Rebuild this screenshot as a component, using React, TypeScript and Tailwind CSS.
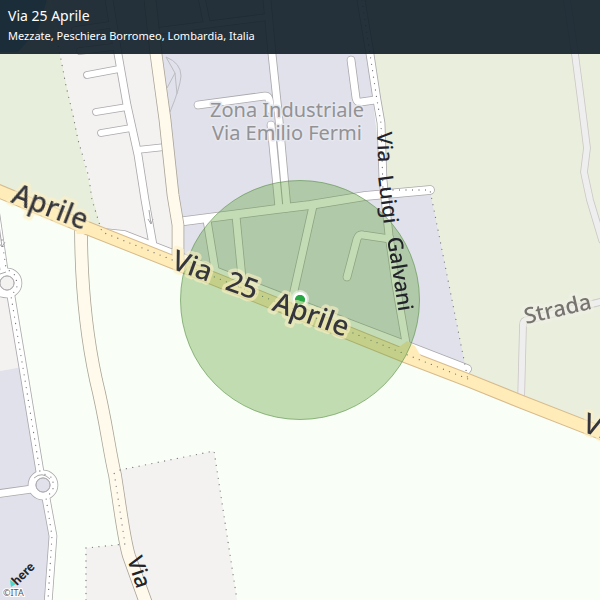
type Road = { d: string; w: number };

const serviceRoads: Road[] = [
  { d: "M109 0L118 54L127 105L138 155L145 200L153 245", w: 7 },
  { d: "M119 69L87 75", w: 6 },
  { d: "M127 107L96 112", w: 6 },
  { d: "M131 128L101 133", w: 6 },
  { d: "M113 47L80 51M110 25L75 30", w: 6 },
  { d: "M137 150L165 147", w: 6 },
  { d: "M158 31L267 17M202 0L207 24", w: 6 },
  { d: "M267 0L272 54L279 120L287 208", w: 7 },
  { d: "M271 125L279 208", w: 7 },
  { d: "M198 105L265 96Q268 96 269 99L271 110", w: 7 },
  { d: "M177 222L277 209L310 205L365 196L430 190", w: 8 },
  { d: "M207 220L215 269", w: 7 },
  { d: "M236 216L242 278", w: 7 },
  { d: "M313 206L292 300", w: 7 },
  { d: "M347 277L357 239Q359 234 363 235L390 239", w: 7 },
  { d: "M361 0L370 54L377 100L381 123L383 180L389 235L396 285L406 343", w: 7 },
  { d: "M351 60L356 98Q357 103 361 102L375 100", w: 7 },
  { d: "M105 233L124 235L173 254L217 272L350 324L405 345L467 369", w: 8 },
  { d: "M-8 195L-4 215L4 270", w: 7 },
  { d: "M11 296L25 380L40 472", w: 7 },
  { d: "M46 498L53 536L48 604", w: 7 },
  { d: "M-4 494L32 489", w: 7 },
  { d: "M-4 293L2 293", w: 7 },
  { d: "M18 283A11 11 0 1 1 -4 283A11 11 0 1 1 18 283", w: 7 },
  { d: "M54 485A11 11 0 1 1 32 485A11 11 0 1 1 54 485", w: 7 },
];

const trackRoads: Road[] = [
  { d: "M567 0L575 54L581 100L587 148L584 172L590 200L602 240", w: 6 },
  { d: "M521 402L523 325Q523 320 528 320L604 301", w: 6 },
];

const localRoads: Road[] = [
  { d: "M150 0L156 54L165 120L173 195L178 225L178 260", w: 11 },
  { d: "M81 226C81 260 83 320 96 380C106 420 109 450 115 475C122 520 124 540 129 556L147 606", w: 12 },
];

const mainRoad = "M-4 190L87 228L175 263L405 356L470 381L522 402L604 434";

const boundaries = [
  "M57 40L60 54L66 86L73 115L78 140L85 163L89 178L92 200L102 232L170 259L400 352L468 379",
  "M362 0L370 54L377 100L381 123L383 190L430 190L468 380",
  "M2 240L6 268L16 276L17 288L11 296L25 380L40 472L53 478L53 490L46 498L52 536L48 600",
  "M86 600V548L125 544L114 472",
  "M120 470L214 451L237 600",
];

const mapFont = 'font-["Noto_Sans","Open_Sans",sans-serif]';

function RoadLayer({ roads, casing, fill }: { roads: Road[]; casing: string; fill: string }) {
  return (
    <g fill="none" strokeLinecap="round" strokeLinejoin="round">
      {roads.map((r) => (
        <path key={"c" + r.d} d={r.d} stroke={casing} strokeWidth={r.w + 1.6} />
      ))}
      {roads.map((r) => (
        <path key={"f" + r.d} d={r.d} stroke={fill} strokeWidth={r.w} />
      ))}
    </g>
  );
}

type Label = { text: string; x: number; y: number; angle: number; size: number; fill: string; halo: string };

const labels: Label[] = [
  { text: "Aprile", x: 10, y: 202, angle: 21, size: 28, fill: "#35353d", halo: "#fdf0c4" },
  { text: "Via", x: 170, y: 268, angle: 20, size: 28, fill: "#35353d", halo: "#fdf0c4" },
  { text: "25", x: 224, y: 289, angle: 20, size: 28, fill: "#35353d", halo: "#fdf0c4" },
  { text: "Aprile", x: 271, y: 310, angle: 20, size: 28, fill: "#35353d", halo: "#fdf0c4" },
  { text: "Via", x: 581, y: 431, angle: 20, size: 28, fill: "#35353d", halo: "#fdf0c4" },
  { text: "Via", x: 377, y: 132, angle: 88, size: 21, fill: "#22232b", halo: "none" },
  { text: "Luigi", x: 378, y: 176, angle: 83, size: 21, fill: "#22232b", halo: "none" },
  { text: "Galvani", x: 387, y: 238, angle: 81, size: 21, fill: "#22232b", halo: "none" },
  { text: "Via", x: 127, y: 559, angle: 72, size: 22, fill: "#22232b", halo: "none" },
  { text: "Strada", x: 526, y: 324, angle: -13, size: 22, fill: "#77736f", halo: "#eef1e4" },
];

function LabelHalos() {
  return (
    <g className={mapFont} opacity="0.6" aria-hidden="true">
      {labels
        .filter((l) => l.halo !== "none")
        .map((l) => (
          <text
            key={l.text + l.x}
            transform={`translate(${l.x} ${l.y}) rotate(${l.angle})`}
            fontSize={l.size}
            fontWeight={500}
            fill={l.halo}
            stroke={l.halo}
            strokeWidth="7"
            strokeLinejoin="round"
          >
            {l.text}
          </text>
        ))}
    </g>
  );
}

function Labels() {
  return (
    <g className={mapFont}>
      {labels.map((l) => (
        <text
          key={l.text + l.x}
          transform={`translate(${l.x} ${l.y}) rotate(${l.angle})`}
          fontSize={l.size}
          fontWeight={500}
          fill={l.fill}
        >
          {l.text}
        </text>
      ))}
    </g>
  );
}

function StreetMap() {
  return (
    <svg viewBox="0 0 600 600" className="block w-full" role="img" aria-label="Via 25 Aprile">
      <rect width="600" height="600" fill="#f9fff6" />
      <path d="M0 0H50L60 54L80 145L102 232L0 190Z" fill="#e8eedc" />
      <path d="M0 0H47L38 30L18 52H0Z" fill="#5fb0f5" opacity="0.8" />
      <path d="M50 0H151L180 262L102 232L80 145L60 54Z" fill="#f3f2f1" />
      <path d="M150 0H362L383 190H430L468 372L410 357L178 262Z" fill="#e0e1eb" />
      <path d="M362 0H600V432L468 380L430 190H383L381 123Z" fill="#e9eedd" />
      <path d="M0 297H11L22 367L0 371Z" fill="#f3f2f1" />
      <path d="M0 371L22 367L40 480L53 536L48 600H0Z" fill="#e0e1eb" />
      <path d="M86 600V548L124 544L115 471L214 451L237 600Z" fill="#f3f2f1" />
      <path
        d="M166 57Q181 63 181 76Q180 88 170 112M166 57L175 73L167 88M175 73L177 94"
        fill="none"
        stroke="#bcbcc2"
      />
      <RoadLayer roads={trackRoads} casing="#cbc7c6" fill="#efeeee" />
      <RoadLayer roads={serviceRoads} casing="#aaa8ab" fill="#ffffff" />
      <RoadLayer roads={localRoads} casing="#aaa598" fill="#fffaec" />
      <g fill="none">
        <path d={mainRoad} stroke="#d8bb8c" strokeWidth="14" />
        <path d="M395 350L407 341L415 346L422 358L407 363Z" fill="#ffecb9" />
        <path d={mainRoad} stroke="#ffecb9" strokeWidth="12" />
        <path d="M82 224V234" stroke="#ffecb9" strokeWidth="11" />
        <path d="M178 249V261" stroke="#fff3d2" strokeWidth="11" />
      </g>
      <g fill="none" stroke="#aaa8ab">
        <circle cx="7" cy="283" r="7" fill="#f3f2f1" />
        <circle cx="43" cy="485" r="7" fill="#e0e1eb" />
        <path d="M34 478Q42 471 50 479M149 210L151 224L148 219M151 224L153 219M-1 225L2 247L-2 242M2 247L5 242M0 274L6 272" />
      </g>
      <g fill="none" stroke="#77777d" strokeWidth="1.3" strokeLinecap="round" strokeDasharray="0 6.5">
        {boundaries.map((d) => (
          <path key={d} d={d} />
        ))}
      </g>
      <g
        className={mapFont}
        fontSize="20"
        fill="#929295"
        stroke="#e6e7ee"
        strokeWidth="3"
        strokeLinejoin="round"
        paintOrder="stroke"
        textAnchor="middle"
      >
        <text x="287" y="117">Zona Industriale</text>
        <text x="287" y="140">Via Emilio Fermi</text>
      </g>
      <circle cx="300" cy="300" r="119.5" fill="#5b9e34" fillOpacity="0.36" stroke="#568d45" strokeOpacity="0.6" />
      <circle cx="300" cy="299" r="9" fill="#e9f1e6" opacity="0.7" />
      <circle cx="300" cy="299" r="7" fill="#ffffff" />
      <circle cx="300" cy="300" r="5" fill="#27a844" />
      <LabelHalos />
      <path d="M295 300A5 5 0 0 1 305 300Z" fill="#27a844" />
      <Labels />
      <path d="M10 580L16 584L11 587Z" fill="#48dad0" />
      <text
        className='font-["Lato",sans-serif]'
        transform="translate(17 586) rotate(-45)"
        fontSize="13"
        fontWeight="900"
        fill="#22252c"
      >
        here
      </text>
      <text
        className={mapFont}
        x="3"
        y="596"
        fontSize="9"
        fill="#55565e"
        stroke="#ffffff"
        strokeWidth="2"
        paintOrder="stroke"
      >
        ©ITA
      </text>
    </svg>
  );
}

export default function App() {
  return (
    <main className="relative w-full overflow-hidden">
      <StreetMap />
      <header className='absolute inset-x-0 top-0 h-[54px] bg-[#14212a]/92 px-2 pt-1 font-["Noto_Sans","Open_Sans",sans-serif] text-white'>
        <h1 className="text-[14px] leading-6">Via 25 Aprile</h1>
        <p className="text-[11px] leading-4">Mezzate, Peschiera Borromeo, Lombardia, Italia</p>
      </header>
    </main>
  );
}
